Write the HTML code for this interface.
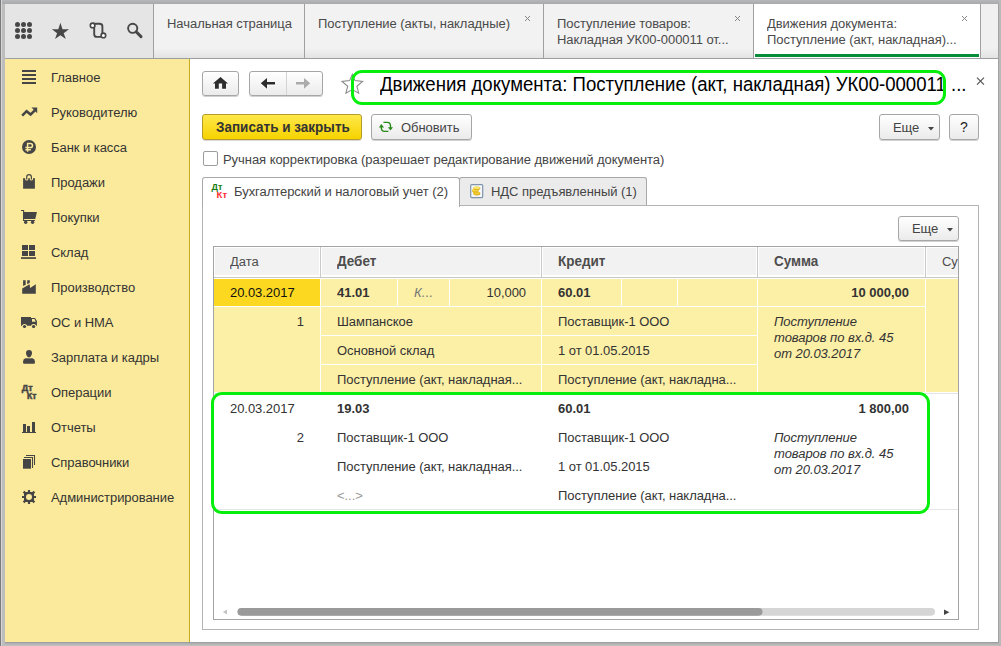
<!DOCTYPE html>
<html><head><meta charset="utf-8">
<style>
*{margin:0;padding:0;box-sizing:border-box}
html,body{width:1001px;height:646px;overflow:hidden}
body{position:relative;background:#b4b4b4;font-family:"Liberation Sans",sans-serif;font-size:13px;color:#333}
.a{position:absolute}
.t{position:absolute;white-space:nowrap;line-height:15px;font-size:13px;letter-spacing:-0.05px;transform:scaleY(1.04);transform-origin:0 12px}
.btn{position:absolute;border:1px solid #a6a6a6;border-radius:3px;background:linear-gradient(#ffffff,#ebebeb);box-shadow:0 1px 0 rgba(0,0,0,0.18)}
</style></head><body>
<!-- frame borders -->
<div class="a" style="left:0;top:0;width:999px;height:4px;background:linear-gradient(#b6b7b9,#a9aaac)"></div>
<div class="a" style="left:0;top:0;width:1px;height:646px;background:#7a7a7a"></div>
<div class="a" style="left:1px;top:0;width:1px;height:646px;background:#d6d6d6"></div>
<div class="a" style="left:2px;top:4px;width:3px;height:642px;background:#bdbdbd"></div>
<div class="a" style="left:998px;top:4px;width:1px;height:642px;background:#a2a2a2"></div>
<div class="a" style="left:999px;top:0;width:2px;height:646px;background:#b9b9b9"></div>
<div class="a" style="left:5px;top:642px;width:993px;height:1px;background:#9c9ea1"></div>
<div class="a" style="left:5px;top:643px;width:994px;height:3px;background:linear-gradient(#adadad,#c2c2c2)"></div>

<!-- toolbar -->
<div class="a" style="left:5px;top:4px;width:148px;height:54px;background:#e5e5e5"></div>
<!-- tab bar -->
<div class="a" style="left:153px;top:4px;width:845px;height:54px;background:linear-gradient(#f2f2f2 0,#f2f2f2 44px,#e3e3e3 54px)"></div>
<div class="a" style="left:981px;top:4px;width:17px;height:54px;background:linear-gradient(#f0f0f0 0,#f0f0f0 44px,#e3e3e3 54px)"></div>
<div class="a" style="left:153px;top:4px;width:1px;height:54px;background:#a0a0a0"></div>
<div class="a" style="left:304px;top:4px;width:1px;height:54px;background:#a0a0a0"></div>
<div class="a" style="left:543px;top:4px;width:1px;height:54px;background:#a0a0a0"></div>
<div class="a" style="left:753px;top:4px;width:1px;height:54px;background:#a0a0a0"></div>
<div class="a" style="left:754px;top:4px;width:226px;height:54px;background:#fff"></div>
<div class="a" style="left:980px;top:4px;width:1px;height:54px;background:#a0a0a0"></div>
<div class="a" style="left:755px;top:54px;width:224px;height:3px;background:#078c38"></div>
<div class="a" style="left:5px;top:58px;width:993px;height:1px;background:#9c9ea2"></div>

<div class="t" style="left:167px;top:16px;color:#4a4a4a">Начальная страница</div>
<div class="t" style="left:318px;top:16px;color:#4a4a4a">Поступление (акты, накладные)</div>
<div class="t" style="left:557px;top:16px;color:#4a4a4a">Поступление товаров:</div>
<div class="t" style="left:557px;top:32px;color:#4a4a4a">Накладная УК00-000011 от...</div>
<div class="t" style="left:767px;top:16px;color:#4a4a4a">Движения документа:</div>
<div class="t" style="left:767px;top:32px;color:#4a4a4a">Поступление (акт, накладная)...</div>

<!-- sidebar -->
<div class="a" style="left:5px;top:59px;width:184px;height:583px;background:#fbea9b"></div>
<div class="a" style="left:189px;top:59px;width:1px;height:583px;background:#c9ab1f"></div>
<!-- content -->
<div class="a" style="left:190px;top:59px;width:808px;height:583px;background:#fff"></div>

<!-- toolbar icons -->
<svg class="a" style="left:0;top:0" width="153" height="58" viewBox="0 0 153 58">
<g fill="#474747">
<circle cx="17.5" cy="24.5" r="2.5"/><circle cx="23.5" cy="24.5" r="2.5"/><circle cx="29.5" cy="24.5" r="2.5"/>
<circle cx="17.5" cy="30.5" r="2.5"/><circle cx="23.5" cy="30.5" r="2.5"/><circle cx="29.5" cy="30.5" r="2.5"/>
<circle cx="17.5" cy="36.5" r="2.5"/><circle cx="23.5" cy="36.5" r="2.5"/><circle cx="29.5" cy="36.5" r="2.5"/>
<path d="M60.4 22.8 L62.5 29.3 L69 29.3 L63.7 33.2 L65.8 39 L60.4 35.3 L55 39 L57.1 33.2 L51.9 29.3 L58.3 29.3 Z"/>
</g>
<g fill="none" stroke="#474747" stroke-width="1.9">
<path d="M92.5 23.7 H99.6 Q102.4 23.7 102.4 26.5 V35.5"/>
<path d="M94.2 26 V34.2 Q94.2 36.9 96.9 36.9 H103.4"/>
<circle cx="92.6" cy="25.4" r="2.3" fill="#fff" stroke-width="1.6"/>
<circle cx="103.4" cy="35.4" r="2.3" fill="#fff" stroke-width="1.6"/>
<circle cx="132.7" cy="28.3" r="4.6"/>
</g>
<path d="M136.2 31.8 L141 36.6" stroke="#474747" stroke-width="3" stroke-linecap="round"/>
</svg>
<!-- sidebar items -->
<div class="t" style="left:51px;top:70px">Главное</div>
<div class="t" style="left:51px;top:105px">Руководителю</div>
<div class="t" style="left:51px;top:140px">Банк и касса</div>
<div class="t" style="left:51px;top:175px">Продажи</div>
<div class="t" style="left:51px;top:210px">Покупки</div>
<div class="t" style="left:51px;top:245px">Склад</div>
<div class="t" style="left:51px;top:280px">Производство</div>
<div class="t" style="left:51px;top:315px">ОС и НМА</div>
<div class="t" style="left:51px;top:350px">Зарплата и кадры</div>
<div class="t" style="left:51px;top:385px">Операции</div>
<div class="t" style="left:51px;top:420px">Отчеты</div>
<div class="t" style="left:51px;top:455px">Справочники</div>
<div class="t" style="left:51px;top:490px">Администрирование</div>
<svg class="a" style="left:0;top:59px" width="189" height="460" viewBox="0 59 189 460">
<g fill="#454545">
<rect x="22" y="70" width="14" height="2"/><rect x="22" y="74" width="14" height="2"/><rect x="22" y="78" width="14" height="2"/><rect x="22" y="82" width="14" height="2"/>
<path d="M22.2 115.6 L26.6 111.2 L30.6 114.6 L34.8 110.4" fill="none" stroke="#454545" stroke-width="2.6"/>
<path d="M31.5 107.5 H37.2 V113.2 Z"/>
<circle cx="29" cy="147" r="7"/>
<rect x="23.1" y="178.2" width="11.8" height="10.5"/>
<path d="M25.1 178 H28.3 V179.2 Q28.3 180.6 26.7 180.6 Q25.1 180.6 25.1 179.2 Z M29.8 178 H33 V179.2 Q33 180.6 31.4 180.6 Q29.8 180.6 29.8 179.2 Z" fill="#fbea9b"/>
<path d="M26.7 179.6 V177 Q26.7 174.6 29.05 174.6 Q31.4 174.6 31.4 177 V179.6" fill="none" stroke="#454545" stroke-width="1.15"/>
<path d="M21 210.5 H23.6 V220.5 H35" fill="none" stroke="#454545" stroke-width="1.1"/>
<path d="M23.4 212.1 H36.9 L35.3 218.9 H23.4 Z"/>
<circle cx="25.7" cy="222.3" r="1.7"/><circle cx="32.6" cy="222.3" r="1.7"/>
<rect x="22" y="245" width="6" height="5"/><rect x="29" y="245" width="6" height="5"/><rect x="22" y="251" width="6" height="5"/><rect x="29" y="251" width="6" height="5"/>
<rect x="21" y="257.2" width="15" height="1.7"/>
<path d="M23.1 280.2 H25.7 V284.7 L23.1 286 Z M27.2 280.2 H29.8 V282.8 L27.2 284.2 Z"/>
<path d="M22.2 288.4 L29.6 284.3 L30.1 288 L35.8 284.2 V293.7 H22.2 Z"/>
<path d="M21 317 H31 V318.1 H35 L36.9 321 V325.8 H21 Z"/>
<path d="M32 318.9 H34.5 L35.7 321.8 H32 Z" fill="#fbea9b"/>
<circle cx="24.5" cy="326.5" r="2.6" fill="#fbea9b"/><circle cx="33.6" cy="326.5" r="2.6" fill="#fbea9b"/>
<circle cx="24.5" cy="326.5" r="1.6"/><circle cx="33.6" cy="326.5" r="1.6"/>
<path d="M23.1 361.2 Q23.1 358.6 25.6 358.2 H32.4 Q34.9 358.6 34.9 361.2 V363 Q34.9 363.8 34 363.8 H24 Q23.1 363.8 23.1 363 Z"/>
<ellipse cx="29" cy="353.9" rx="3.6" ry="4.4" fill="#fbea9b"/>
<path d="M26 353 Q26 350.1 29 350.1 Q32 350.1 32 353 Q32 355.6 30.3 357.1 Q29 357.8 27.7 357.1 Q26 355.6 26 353 Z"/>
<rect x="23" y="424" width="3" height="9"/><rect x="27" y="426" width="3" height="7"/><rect x="32" y="422" width="3" height="11"/>
<rect x="22" y="432" width="14" height="1"/>
<rect x="23" y="459" width="8" height="9.7"/>
<path d="M32.5 468 V457.5 H24" fill="none" stroke="#454545" stroke-width="1.05"/>
<path d="M34.5 465 V455.5 H26" fill="none" stroke="#454545" stroke-width="1.05"/>
<circle cx="29" cy="497" r="5"/>
</g>
<path d="M27.6 151.8 V143.4 H30.4 Q32.5 143.4 32.5 145.5 Q32.5 147.6 30.4 147.6 H25.4 M25.4 149.7 H30.9" fill="none" stroke="#fbea9b" stroke-width="1.5"/>
<text x="21.8" y="391.4" fill="#454545" stroke="#454545" stroke-width="0.5" font-size="9" font-weight="bold" font-family="Liberation Sans">Дт</text>
<text x="27" y="399" fill="#454545" stroke="#454545" stroke-width="0.5" font-size="8.6" font-weight="bold" font-family="Liberation Sans">Кт</text>
<circle cx="29" cy="497" r="2.6" fill="#fbea9b"/>
<g stroke="#454545" stroke-width="2.2">
<path d="M29 490 V504 M22 497 H36 M23.6 491.6 L34.4 502.4 M34.4 491.6 L23.6 502.4"/>
</g>
<path d="M25.6 492 H32.4 L34 493.6 V500.4 L32.4 502 H25.6 L24 500.4 V493.6 Z" fill="#454545"/>
<circle cx="29" cy="497" r="3" fill="#fbea9b"/>
</svg>

<div id="main"></div>










<!--MAIN-->
<div class="btn" style="left:202px;top:71px;width:37px;height:25px"></div>
<div class="btn" style="left:249px;top:71px;width:74px;height:25px"></div>
<div class="a" style="left:286px;top:72px;width:1px;height:23px;background:#d4d4d4;"></div>
<svg class="a" style="left:0;top:0" width="400" height="110" viewBox="0 0 400 110">
<g fill="#fff" transform="translate(0,1)">
<path d="M220.5 76.9 L228 83.4 H226 V88.7 H222.1 V83.4 H218.8 V88.7 H215 V83.4 H212.9 Z"/>
<path d="M260.8 83.3 L267 77.9 V82 H275 V84.6 H267 V88.7 Z"/>
</g>
<g fill="#2d2d2d">
<path d="M220.5 76.9 L228 83.4 H226 V88.7 H222.1 V83.4 H218.8 V88.7 H215 V83.4 H212.9 Z"/>
<path d="M260.8 83.3 L267 77.9 V82 H275 V84.6 H267 V88.7 Z"/>
</g>
<path d="M310.2 83.3 L304 77.9 V82 H296 V84.6 H304 V88.7 Z" fill="#ababab"/>
<path d="M352.3 74.3 L355 80.6 L362.6 81.5 L356.9 86.3 L358.7 93.2 L352.3 89.6 L345.9 93.2 L347.7 86.3 L342 81.5 L349.6 80.6 Z" fill="none" stroke="#8a8a8a" stroke-width="1.1" stroke-linejoin="miter"/>
</svg>
<div class="t" style="left:380px;top:74px;font-size:18.6px;line-height:22px;color:#000;letter-spacing:0;transform:scaleY(1.1);transform-origin:0 18px">Движения документа: Поступление (акт, накладная) УК00-000011 ...</div>
<div class="a" style="left:351px;top:70px;width:595px;height:35px;border:3.3px solid #05ee0c;border-radius:11px"></div>
<svg class="a" style="left:970px;top:70px" width="20" height="20" viewBox="970 70 20 20"><path d="M977 77.6 L984 84.6 M984 77.6 L977 84.6" stroke="#555" stroke-width="1.2"/></svg>
<div class="a" style="left:525px;top:16px;width:1px;height:1px;background:#858585;"></div>
<div class="a" style="left:529px;top:16px;width:1px;height:1px;background:#858585;"></div>
<div class="a" style="left:526px;top:17px;width:1px;height:1px;background:#858585;"></div>
<div class="a" style="left:528px;top:17px;width:1px;height:1px;background:#858585;"></div>
<div class="a" style="left:527px;top:18px;width:1px;height:1px;background:#858585;"></div>
<div class="a" style="left:527px;top:18px;width:1px;height:1px;background:#858585;"></div>
<div class="a" style="left:528px;top:19px;width:1px;height:1px;background:#858585;"></div>
<div class="a" style="left:526px;top:19px;width:1px;height:1px;background:#858585;"></div>
<div class="a" style="left:529px;top:20px;width:1px;height:1px;background:#858585;"></div>
<div class="a" style="left:525px;top:20px;width:1px;height:1px;background:#858585;"></div>
<div class="a" style="left:735px;top:16px;width:1px;height:1px;background:#858585;"></div>
<div class="a" style="left:739px;top:16px;width:1px;height:1px;background:#858585;"></div>
<div class="a" style="left:736px;top:17px;width:1px;height:1px;background:#858585;"></div>
<div class="a" style="left:738px;top:17px;width:1px;height:1px;background:#858585;"></div>
<div class="a" style="left:737px;top:18px;width:1px;height:1px;background:#858585;"></div>
<div class="a" style="left:737px;top:18px;width:1px;height:1px;background:#858585;"></div>
<div class="a" style="left:738px;top:19px;width:1px;height:1px;background:#858585;"></div>
<div class="a" style="left:736px;top:19px;width:1px;height:1px;background:#858585;"></div>
<div class="a" style="left:739px;top:20px;width:1px;height:1px;background:#858585;"></div>
<div class="a" style="left:735px;top:20px;width:1px;height:1px;background:#858585;"></div>
<div class="a" style="left:962px;top:16px;width:1px;height:1px;background:#858585;"></div>
<div class="a" style="left:966px;top:16px;width:1px;height:1px;background:#858585;"></div>
<div class="a" style="left:963px;top:17px;width:1px;height:1px;background:#858585;"></div>
<div class="a" style="left:965px;top:17px;width:1px;height:1px;background:#858585;"></div>
<div class="a" style="left:964px;top:18px;width:1px;height:1px;background:#858585;"></div>
<div class="a" style="left:964px;top:18px;width:1px;height:1px;background:#858585;"></div>
<div class="a" style="left:965px;top:19px;width:1px;height:1px;background:#858585;"></div>
<div class="a" style="left:963px;top:19px;width:1px;height:1px;background:#858585;"></div>
<div class="a" style="left:966px;top:20px;width:1px;height:1px;background:#858585;"></div>
<div class="a" style="left:962px;top:20px;width:1px;height:1px;background:#858585;"></div>
<div class="a" style="left:202px;top:114px;width:160px;height:26px;border:1px solid #b59c2a;border-radius:3px;background:linear-gradient(#ffe84a,#f6d300);box-shadow:0 1px 0 rgba(0,0,0,0.15)"></div>
<div class="t" style="left:216px;top:120px;font-weight:bold;font-size:13.5px;letter-spacing:0;color:#333">Записать и закрыть</div>
<div class="btn" style="left:371px;top:114px;width:101px;height:26px"></div>
<svg class="a" style="left:370px;top:112px" width="30" height="26" viewBox="370 112 30 26">
<path d="M383.4 122.4 H387.3 Q390.5 122.4 390.5 126 V128" fill="none" stroke="#2a8a1a" stroke-width="1.4"/>
<path d="M388.4 131.4 H384.4 Q381.4 131.4 381.4 128 V126" fill="none" stroke="#2a8a1a" stroke-width="1.4"/>
<path d="M387.9 127.2 H393 L390.45 130.6 Z" fill="#2a8a1a"/>
<path d="M378.8 127.6 H384 L381.4 124 Z" fill="#2a8a1a"/>
</svg>
<div class="t" style="left:401px;top:120px;color:#444">Обновить</div>
<div class="btn" style="left:879px;top:114px;width:61px;height:26px"></div>
<div class="t" style="left:893px;top:120px;color:#444">Еще</div>
<svg class="a" style="left:927px;top:126px" width="8" height="6" viewBox="0 0 8 6"><path d="M1 1 H7 L4 4.5 Z" fill="#444"/></svg>
<div class="btn" style="left:949px;top:114px;width:30px;height:26px"></div>
<div class="t" style="left:960px;top:120px;color:#222;font-size:14px">?</div>
<div class="a" style="left:203px;top:151px;width:15px;height:15px;border:1px solid #9d9d9d;border-radius:2px;background:#fff"></div>
<div class="t" style="left:223px;top:152px;color:#444">Ручная корректировка (разрешает редактирование движений документа)</div>
<div class="a" style="left:202px;top:205px;width:777px;height:425px;background:#fff;border:1px solid #b4b4b4"></div>
<div class="a" style="left:459px;top:177px;width:188px;height:28px;background:#ebebeb;border:1px solid #a8a8a8;border-bottom:none;border-radius:3px 3px 0 0"></div>
<div class="a" style="left:202px;top:177px;width:258px;height:30px;background:#fff;border:1px solid #a8a8a8;border-bottom:none;border-radius:3px 3px 0 0"></div>
<svg class="a" style="left:200px;top:178px" width="40" height="25" viewBox="200 178 40 25"><text x="211.6" y="189.5" font-size="9" font-weight="bold" font-family="Liberation Sans" fill="#1a7a12">Дт</text><text x="216.6" y="198" font-size="9.5" font-weight="bold" font-family="Liberation Sans" fill="#ff2d2d">Кт</text></svg>
<div class="t" style="left:234px;top:184px;color:#444">Бухгалтерский и налоговый учет (2)</div>
<svg class="a" style="left:466px;top:181px" width="20" height="20" viewBox="466 181 20 20">
<rect x="470.7" y="184.6" width="12" height="13" rx="1" fill="#f4f8fd" stroke="#7f93aa" stroke-width="1.2"/>
<ellipse cx="476.8" cy="193.6" rx="3.6" ry="1.9" fill="#d9a81a"/>
<ellipse cx="476.3" cy="193.0" rx="3.4" ry="1.5" fill="#f2cc33"/>
<ellipse cx="475.4" cy="190.7" rx="3.4" ry="1.8" fill="#d9a81a"/>
<ellipse cx="475.4" cy="190.2" rx="3.3" ry="1.4" fill="#f5d840"/>
<ellipse cx="476.8" cy="188.3" rx="3.6" ry="1.8" fill="#dcae20"/>
<ellipse cx="476.6" cy="187.8" rx="3.3" ry="1.3" fill="#fbe66a"/>
</svg>
<div class="t" style="left:491px;top:184px;color:#444">НДС предъявленный (1)</div>
<div class="btn" style="left:898px;top:216px;width:61px;height:25px"></div>
<div class="t" style="left:912px;top:221px;color:#444">Еще</div>
<svg class="a" style="left:946px;top:227px" width="8" height="6" viewBox="0 0 8 6"><path d="M1 1 H7 L4 4.5 Z" fill="#444"/></svg>
<div class="a" style="left:213px;top:246px;width:746px;height:374px;background:#fff;border:1px solid #a3a3a3"></div>
<div class="a" style="left:214px;top:247px;width:744px;height:30px;background:#f2f2f2;"></div>
<div class="a" style="left:214px;top:247px;width:744px;height:1px;background:#fff;"></div>
<div class="a" style="left:214px;top:247px;width:1px;height:30px;background:#fff;"></div>
<div class="a" style="left:214px;top:275px;width:744px;height:2px;background:#fff;"></div>
<div class="a" style="left:214px;top:277px;width:744px;height:1px;background:#c9c9c9;"></div>
<div class="a" style="left:319px;top:247px;width:1px;height:28px;background:#fff;"></div>
<div class="a" style="left:320px;top:247px;width:1px;height:30px;background:#c9c9c9;"></div>
<div class="a" style="left:321px;top:247px;width:1px;height:28px;background:#fff;"></div>
<div class="a" style="left:540px;top:247px;width:1px;height:28px;background:#fff;"></div>
<div class="a" style="left:541px;top:247px;width:1px;height:30px;background:#c9c9c9;"></div>
<div class="a" style="left:542px;top:247px;width:1px;height:28px;background:#fff;"></div>
<div class="a" style="left:756px;top:247px;width:1px;height:28px;background:#fff;"></div>
<div class="a" style="left:757px;top:247px;width:1px;height:30px;background:#c9c9c9;"></div>
<div class="a" style="left:758px;top:247px;width:1px;height:28px;background:#fff;"></div>
<div class="a" style="left:924px;top:247px;width:1px;height:28px;background:#fff;"></div>
<div class="a" style="left:925px;top:247px;width:1px;height:30px;background:#c9c9c9;"></div>
<div class="a" style="left:926px;top:247px;width:1px;height:28px;background:#fff;"></div>
<div class="t" style="left:230px;top:254px;color:#4d4d4d">Дата</div>
<div class="t" style="left:337px;top:254px;color:#4d4d4d;font-weight:bold;font-size:13.5px;letter-spacing:0">Дебет</div>
<div class="t" style="left:558px;top:254px;color:#4d4d4d;font-weight:bold;font-size:13.5px;letter-spacing:0">Кредит</div>
<div class="t" style="left:774px;top:254px;color:#4d4d4d;font-weight:bold;font-size:13.5px;letter-spacing:0">Сумма</div>
<div class="t" style="left:942px;top:254px;color:#4d4d4d">Су</div>
<div class="a" style="left:214px;top:278px;width:744px;height:114px;background:#fcefa6;"></div>
<div class="a" style="left:214px;top:278px;width:744px;height:1px;background:#fff;"></div>
<div class="a" style="left:214px;top:279px;width:106px;height:27px;background:#fcd920;"></div>
<div class="a" style="left:320px;top:279px;width:1px;height:113px;background:#fff;"></div>
<div class="a" style="left:541px;top:279px;width:1px;height:113px;background:#fff;"></div>
<div class="a" style="left:757px;top:279px;width:1px;height:113px;background:#fff;"></div>
<div class="a" style="left:925px;top:279px;width:1px;height:113px;background:#fff;"></div>
<div class="a" style="left:397px;top:279px;width:1px;height:27px;background:#fff;"></div>
<div class="a" style="left:449px;top:279px;width:1px;height:27px;background:#fff;"></div>
<div class="a" style="left:621px;top:279px;width:1px;height:27px;background:#fff;"></div>
<div class="a" style="left:677px;top:279px;width:1px;height:27px;background:#fff;"></div>
<div class="a" style="left:321px;top:306px;width:604px;height:1px;background:#fff;"></div>
<div class="a" style="left:214px;top:306px;width:106px;height:1px;background:#fff;"></div>
<div class="a" style="left:321px;top:335px;width:436px;height:1px;background:#fff;"></div>
<div class="a" style="left:321px;top:364px;width:436px;height:1px;background:#fff;"></div>
<div class="a" style="left:214px;top:392px;width:744px;height:1px;background:#fff;"></div>
<div class="a" style="left:214px;top:393px;width:744px;height:1px;background:#e4e4e4;"></div>
<div class="a" style="left:214px;top:509px;width:744px;height:1px;background:#e6e6e6;"></div>
<div class="t" style="left:230px;top:285px;color:#111">20.03.2017</div>
<div class="t" style="left:337px;top:285px;color:#333;font-weight:bold;font-size:13px;letter-spacing:0">41.01</div>
<div class="t" style="left:414px;top:285px;color:#777;font-style:italic;letter-spacing:0.2px">К...</div>
<div class="t" style="right:475px;top:285px;color:#333">10,000</div>
<div class="t" style="left:558px;top:285px;color:#333;font-weight:bold;font-size:13px;letter-spacing:0">60.01</div>
<div class="t" style="right:92px;top:285px;color:#333;font-weight:bold;font-size:13px;letter-spacing:0">10 000,00</div>
<div class="t" style="right:697px;top:314px;color:#333">1</div>
<div class="t" style="left:337px;top:314px;color:#333">Шампанское</div>
<div class="t" style="left:558px;top:314px;color:#333">Поставщик-1 ООО</div>
<div class="t" style="left:774px;top:314px;color:#333;font-style:italic">Поступление</div>
<div class="t" style="left:774px;top:330px;color:#333;font-style:italic">товаров по вх.д. 45</div>
<div class="t" style="left:774px;top:346px;color:#333;font-style:italic">от 20.03.2017</div>
<div class="t" style="left:337px;top:343px;color:#333">Основной склад</div>
<div class="t" style="left:558px;top:343px;color:#333">1 от 01.05.2015</div>
<div class="t" style="left:337px;top:372px;color:#333">Поступление (акт, накладная...</div>
<div class="t" style="left:558px;top:372px;color:#333">Поступление (акт, накладна...</div>
<div class="t" style="left:230px;top:401px;color:#333">20.03.2017</div>
<div class="t" style="left:337px;top:401px;color:#333;font-weight:bold;font-size:13px;letter-spacing:0">19.03</div>
<div class="t" style="left:558px;top:401px;color:#333;font-weight:bold;font-size:13px;letter-spacing:0">60.01</div>
<div class="t" style="right:92px;top:401px;color:#333;font-weight:bold;font-size:13px;letter-spacing:0">1 800,00</div>
<div class="t" style="right:697px;top:430px;color:#333">2</div>
<div class="t" style="left:337px;top:430px;color:#333">Поставщик-1 ООО</div>
<div class="t" style="left:558px;top:430px;color:#333">Поставщик-1 ООО</div>
<div class="t" style="left:774px;top:430px;color:#333;font-style:italic">Поступление</div>
<div class="t" style="left:774px;top:446px;color:#333;font-style:italic">товаров по вх.д. 45</div>
<div class="t" style="left:774px;top:462px;color:#333;font-style:italic">от 20.03.2017</div>
<div class="t" style="left:337px;top:459px;color:#333">Поступление (акт, накладная...</div>
<div class="t" style="left:558px;top:459px;color:#333">1 от 01.05.2015</div>
<div class="t" style="left:337px;top:488px;color:#999">&lt;...&gt;</div>
<div class="t" style="left:558px;top:488px;color:#333">Поступление (акт, накладна...</div>
<div class="a" style="left:211px;top:392px;width:719px;height:122px;border:3px solid #05ee0c;border-radius:11px"></div>
<svg class="a" style="left:214px;top:600px" width="744" height="19" viewBox="214 600 744 19">
<path d="M227 609.4 V614.6 L222.8 612 Z" fill="#c4c4c4"/>
<rect x="237.5" y="608" width="697.5" height="7.7" rx="3.85" fill="#d5d5d5"/>
<rect x="237.5" y="608" width="525" height="7.7" rx="3.85" fill="#9a9a9a"/>
<path d="M944 609.6 V614.9 L949.4 612.25 Z" fill="#444"/>
</svg>
<!--/MAIN-->
</body></html>
